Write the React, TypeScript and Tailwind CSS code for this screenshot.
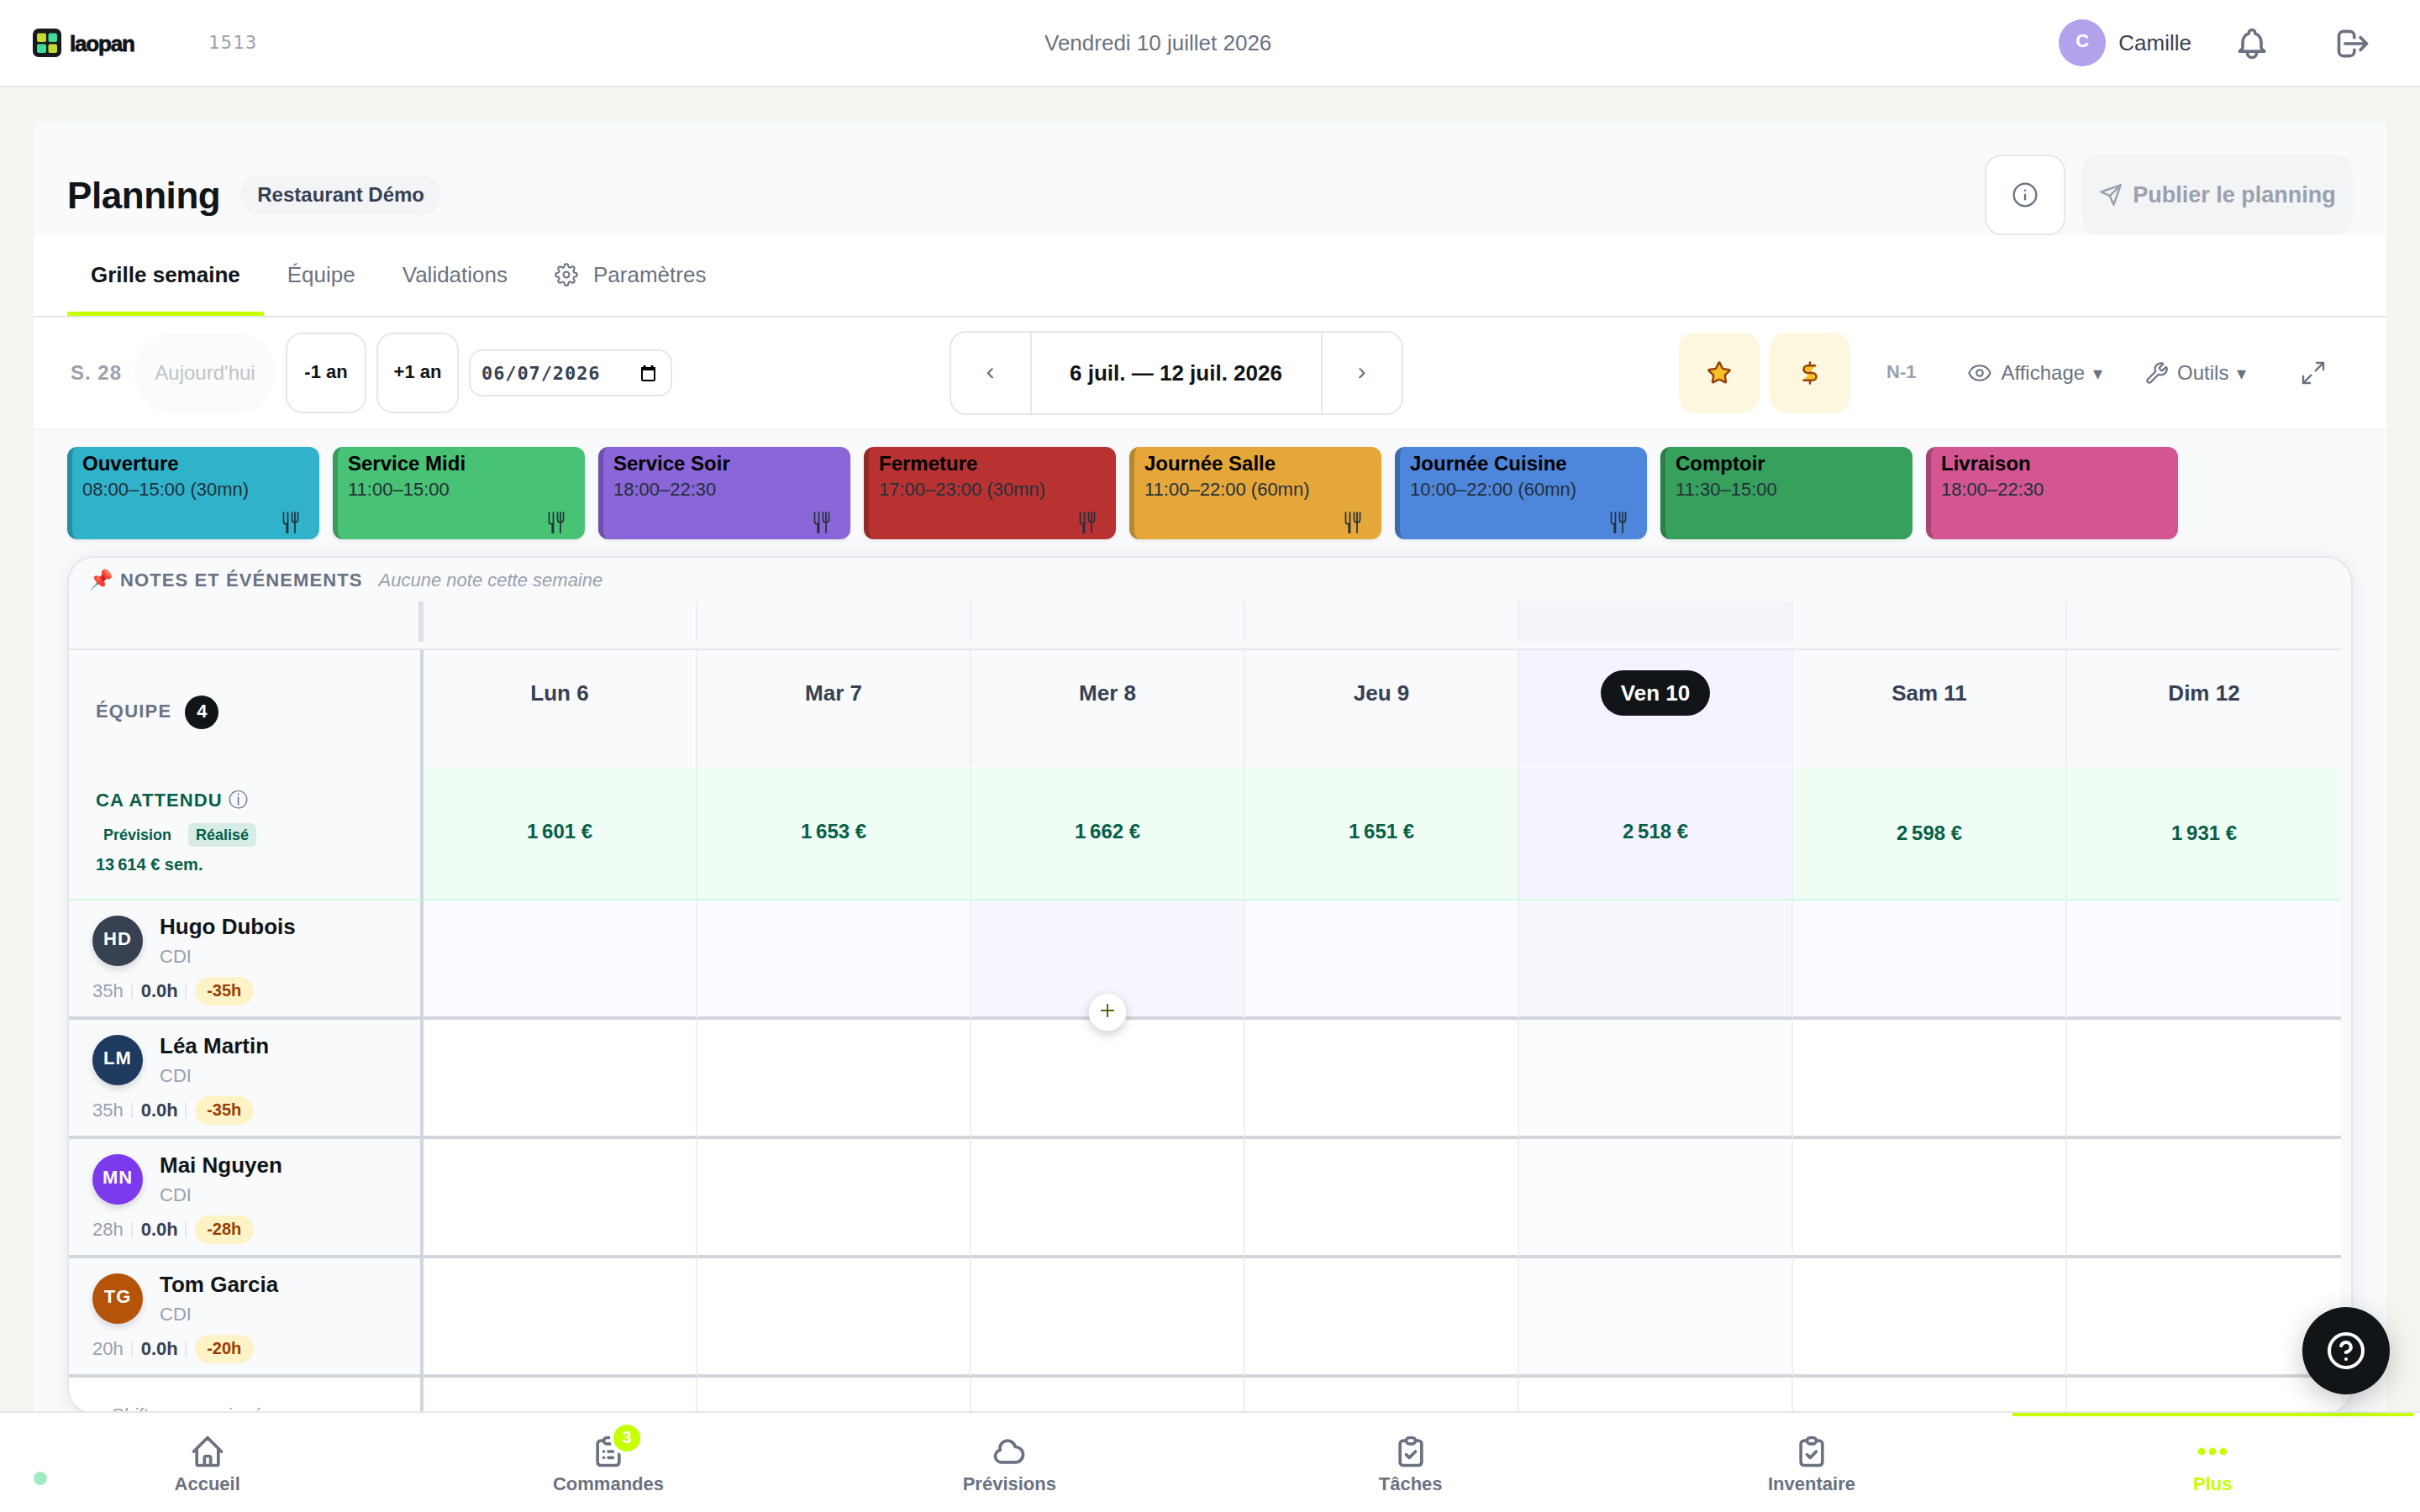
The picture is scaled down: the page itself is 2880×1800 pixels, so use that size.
import React from "react";
import { CircleHelp, DollarSign, Eye, Info, Maximize2, Star, Wrench } from "lucide-react";

const OUTLINE = {
  bell: "M15 17h5l-1.405-1.405A2.032 2.032 0 0118 14.158V11a6.002 6.002 0 00-4-5.659V5a2 2 0 10-4 0v.341C7.67 6.165 6 8.388 6 11v3.159c0 .538-.214 1.055-.595 1.436L4 17h5m6 0v1a3 3 0 11-6 0v-1m6 0H9",
  logout: "M17 16l4-4m0 0l-4-4m4 4H7m6 4v1a3 3 0 01-3 3H6a3 3 0 01-3-3V7a3 3 0 013-3h4a3 3 0 013 3v1",
  home: "M3 12l2-2m0 0l7-7 7 7M5 10v10a1 1 0 001 1h3m10-11l2 2m-2-2v10a1 1 0 01-1 1h-3m-6 0a1 1 0 001-1v-4a1 1 0 011-1h2a1 1 0 011 1v4a1 1 0 001 1m-6 0h6",
  list: "M9 5H7a2 2 0 00-2 2v12a2 2 0 002 2h10a2 2 0 002-2V7a2 2 0 00-2-2h-2M9 5a2 2 0 002 2h2a2 2 0 002-2M9 5a2 2 0 012-2h2a2 2 0 012 2m-3 7h3m-3 4h3m-6-4h.01M9 16h.01",
  check: "M9 5H7a2 2 0 00-2 2v12a2 2 0 002 2h10a2 2 0 002-2V7a2 2 0 00-2-2h-2M9 5a2 2 0 002 2h2a2 2 0 002-2M9 5a2 2 0 012-2h2a2 2 0 012 2m-6 9l2 2 4-4",
  cloud: "M3 15a4 4 0 004 4h9a5 5 0 10-.1-9.999 5.002 5.002 0 10-9.78 2.096A4.001 4.001 0 003 15z",
  dots: "M5 12h.01M12 12h.01M19 12h.01M6 12a1 1 0 11-2 0 1 1 0 012 0zm7 0a1 1 0 11-2 0 1 1 0 012 0zm7 0a1 1 0 11-2 0 1 1 0 012 0z",
};

function Outline({ name, weight = 2 }: { name: keyof typeof OUTLINE; weight?: number }) {
  return (
    <svg className="size-11" viewBox="0 0 24 24" fill="none" stroke="currentColor" strokeWidth={weight} strokeLinecap="round" strokeLinejoin="round">
      <path d={OUTLINE[name]} />
    </svg>
  );
}

function SendIcon() {
  return (
    <svg className="size-7" viewBox="0 0 24 24" fill="none" stroke="currentColor" strokeWidth={2.1} strokeLinecap="round" strokeLinejoin="round">
      <path d="M22 2 11 13M22 2l-7 20-4-9-9-4 20-7z" />
    </svg>
  );
}

function GearIcon() {
  return (
    <svg className="size-7" viewBox="0 0 24 24" fill="none" stroke="currentColor" strokeWidth={1.75} strokeLinecap="round" strokeLinejoin="round">
      <circle cx="12" cy="12" r="3" />
      <path d="M19.4 15a1.65 1.65 0 0 0 .33 1.82l.06.06a2 2 0 0 1 0 2.83 2 2 0 0 1-2.83 0l-.06-.06a1.65 1.65 0 0 0-1.82-.33 1.65 1.65 0 0 0-1 1.51V21a2 2 0 0 1-2 2 2 2 0 0 1-2-2v-.09A1.65 1.65 0 0 0 9 19.4a1.65 1.65 0 0 0-1.82.33l-.06.06a2 2 0 0 1-2.83 0 2 2 0 0 1 0-2.83l.06-.06a1.65 1.65 0 0 0 .33-1.82 1.65 1.65 0 0 0-1.51-1H3a2 2 0 0 1-2-2 2 2 0 0 1 2-2h.09A1.65 1.65 0 0 0 4.6 9a1.65 1.65 0 0 0-.33-1.82l-.06-.06a2 2 0 0 1 0-2.83 2 2 0 0 1 2.83 0l.06.06a1.65 1.65 0 0 0 1.82.33H9a1.65 1.65 0 0 0 1-1.51V3a2 2 0 0 1 2-2 2 2 0 0 1 2 2v.09a1.65 1.65 0 0 0 1 1.51 1.65 1.65 0 0 0 1.82-.33l.06-.06a2 2 0 0 1 2.83 0 2 2 0 0 1 0 2.83l-.06.06a1.65 1.65 0 0 0-.33 1.82V9a1.65 1.65 0 0 0 1.51 1H21a2 2 0 0 1 2 2 2 2 0 0 1-2 2h-.09a1.65 1.65 0 0 0-1.51 1z" />
    </svg>
  );
}

function Logo() {
  return (
    <svg className="size-[34px]" viewBox="0 0 34 34">
      <rect width="34" height="34" rx="7" fill="#16191d" />
      <rect x="5" y="5.5" width="11" height="10.5" rx="2" fill="#c6d92f" />
      <rect x="18.5" y="5.5" width="10.5" height="10.5" rx="2" fill="#3ddc97" />
      <rect x="5" y="18.5" width="11" height="10.5" rx="2" fill="#3ddc97" />
      <rect x="18.5" y="18.5" width="10.5" height="10.5" rx="2" fill="#c6d92f" />
    </svg>
  );
}

function Cutlery() {
  return (
    <svg className="h-7 w-5" viewBox="0 0 20 28" fill="none" stroke="#22303a" strokeWidth={1.7} strokeLinecap="round">
      <path d="M1.500 2v11c0 2 1.500 3 4 3M6.500 2v24" />
      <path d="M5.500 15.500v10.500" strokeWidth={2.2} />
      <path d="M11.500 2v8c0 3 1 4 3.500 4s3.500-1 3.500-4V2M15 2v24" />
    </svg>
  );
}

function Header() {
  return (
    <header className="flex h-[104px] shrink-0 items-center border-b-2 border-gray-200 bg-white pl-[39px] pr-[58px]">
      <div className="flex w-[204px] items-center gap-[10px]">
        <Logo />
        <span className="pt-[2px] text-[26px] font-bold leading-none tracking-[-1.2px] text-[#111518] [-webkit-text-stroke:0.8px_#111518]">laopan</span>
      </div>
      <span className="w-[1000px] pl-[5px] font-['DejaVu_Sans_Mono',monospace] text-[22px] leading-none tracking-[1.4px] text-gray-400">1513</span>
      <span className="text-[26px] leading-none text-gray-500">Vendredi 10 juillet 2026</span>
      <div className="ml-auto flex items-center">
        <div className="flex size-14 items-center justify-center rounded-full bg-[#b3a1ec] pb-[6px] text-[22px] font-bold text-white">C</div>
        <span className="ml-[15px] text-[26px] leading-none text-gray-700">Camille</span>
        <span className="ml-[50px] pt-px text-gray-500"><Outline name="bell" /></span>
        <span className="ml-[76px] pt-px text-gray-500"><Outline name="logout" /></span>
      </div>
    </header>
  );
}

function Title() {
  return (
    <div className="flex h-[136px] items-end px-10">
      <div className="flex h-24 w-full items-center">
        <h1 className="pt-[2px] text-[44px] font-bold leading-none tracking-[-0.44px] text-[#111518]">Planning</h1>
        <span className="ml-6 flex h-12 items-center rounded-full bg-gray-100 px-[20px] text-[24px] font-bold text-gray-700">Restaurant Démo</span>
        <button className="ml-auto flex size-24 items-center justify-center rounded-[20px] border-2 border-gray-200 bg-white text-gray-500">
          <Info className="size-8" strokeWidth={1.75} />
        </button>
        <button className="ml-5 flex h-24 w-[322px] items-center justify-center gap-3 rounded-[20px] bg-gray-100 text-[27px] font-bold text-gray-400">
          <SendIcon />
          Publier le planning
        </button>
      </div>
    </div>
  );
}

function Tabs() {
  return (
    <div className="flex h-[98px] items-stretch border-b-2 border-gray-200 bg-white px-10 text-[26px] text-gray-500">
      <span className="flex items-center border-b-[5px] border-[#c6ff00] px-7 pt-1 font-bold text-[#111518]">Grille semaine</span>
      <span className="flex items-center px-7 pb-[2px]">Équipe</span>
      <span className="flex items-center px-7 pb-[2px]">Validations</span>
      <span className="flex items-center gap-[18px] px-7 pb-[2px]">
        <GearIcon />
        Paramètres
      </span>
    </div>
  );
}

function Toolbar() {
  return (
    <div className="flex h-[134px] items-center justify-between border-b-2 border-gray-100 bg-white px-10">
      <div className="flex w-[1050px] items-center">
        <span className="w-20 pl-1 text-[24px] font-bold tracking-[1px] text-gray-400">S. 28</span>
        <button className="flex h-24 w-[168px] items-center justify-center rounded-[48px] bg-[#fafbfb] text-[24px] text-[#c0c4c9]">Aujourd'hui</button>
        <button className="ml-3 flex h-24 w-24 items-center justify-center rounded-[20px] border-2 border-gray-200 pb-[3px] text-[22px] font-bold text-[#111518]">-1 an</button>
        <button className="ml-3 flex h-24 w-[98px] items-center justify-center rounded-[20px] border-2 border-gray-200 pb-[3px] text-[22px] font-bold text-[#111518]">+1 an</button>
        <span className="ml-3 flex h-14 w-[242px] items-center justify-between rounded-2xl border-2 border-gray-200 bg-white pl-[13px] pr-[18px] font-['DejaVu_Sans_Mono',monospace] text-[22px] font-bold tracking-[0.9px] text-gray-700">
          06/07/2026
          <svg className="h-[19px] w-[17px]" viewBox="0 0 17 19" fill="none" stroke="#000" strokeWidth={2}>
            <path d="M1 3h15v13.500a1.500 1.500 0 0 1-1.500 1.500h-12A1.500 1.500 0 0 1 1 16.500z" />
            <path d="M1 4.500h15M4 0v3M13 0v3" strokeWidth={3} />
          </svg>
        </span>
      </div>
      <div className="flex h-[100px] w-[540px] items-stretch rounded-[20px] border-2 border-gray-200 text-[#111518]">
        <span className="flex w-24 items-center justify-center border-r-2 border-gray-200 pb-[6px] pr-px text-[30px] text-gray-500">‹</span>
        <span className="flex flex-1 items-center justify-center pr-px text-[26px] font-bold">6 juil. — 12 juil. 2026</span>
        <span className="flex w-24 items-center justify-center border-l-2 border-gray-200 pb-[6px] pr-px text-[30px] text-gray-500">›</span>
      </div>
      <div className="flex w-[1130px] items-center pl-[328px] text-[24px] text-gray-500">
        <button className="flex size-24 items-center justify-center rounded-[20px] bg-[#fef7e0]">
          <Star className="size-[30px] text-[#92400e]" fill="#fbbf24" strokeWidth={2} />
        </button>
        <button className="ml-3 flex size-24 items-center justify-center rounded-[20px] bg-[#fef7e0]">
          <DollarSign className="size-[30px] text-[#92400e]" fill="#fbbf24" strokeWidth={2} />
        </button>
        <span className="ml-[43px] pb-[3px] text-[22px] font-bold text-gray-400">N-1</span>
        <span className="ml-[61px] flex items-center gap-[10px]">
          <Eye className="size-[30px]" strokeWidth={1.75} />
          Affichage
          <span className="text-[22px]">▾</span>
        </span>
        <span className="ml-[51px] flex items-center gap-[10px]">
          <Wrench className="size-7" strokeWidth={1.9} />
          Outils
          <span className="text-[22px]">▾</span>
        </span>
        <Maximize2 className="ml-auto mr-[31px] size-8" strokeWidth={1.8} />
      </div>
    </div>
  );
}

const SHIFTS = [
  { name: "Ouverture", time: "08:00–15:00 (30mn)", meal: true, bg: "bg-[#2fb2ca]" },
  { name: "Service Midi", time: "11:00–15:00", meal: true, bg: "bg-[#48c274]" },
  { name: "Service Soir", time: "18:00–22:30", meal: true, bg: "bg-[#8a66d9]" },
  { name: "Fermeture", time: "17:00–23:00 (30mn)", meal: true, bg: "bg-[#b93232]" },
  { name: "Journée Salle", time: "11:00–22:00 (60mn)", meal: true, bg: "bg-[#e5a73a]" },
  { name: "Journée Cuisine", time: "10:00–22:00 (60mn)", meal: true, bg: "bg-[#4e86db]" },
  { name: "Comptoir", time: "11:30–15:00", meal: false, bg: "bg-[#36a05c]" },
  { name: "Livraison", time: "18:00–22:30", meal: false, bg: "bg-[#d35692]" },
];

function ShiftBar() {
  return (
    <div className="flex gap-4 px-10 pt-5">
      {SHIFTS.map((s) => (
        <div key={s.name} className={`${s.bg} relative h-[110px] w-[300px] rounded-xl border-l-[6px] border-black/20 pl-3 pt-[5px] shadow-[0_2px_4px_rgba(0,0,0,0.08)]`}>
          <div className="text-[24px] font-bold leading-[29px] text-black">{s.name}</div>
          <div className="pt-px text-[22px] leading-[31px] text-[#22303a]">{s.time}</div>
          {s.meal && <span className="absolute bottom-[6px] right-6"><Cutlery /></span>}
        </div>
      ))}
    </div>
  );
}

const DAYS = [
  { label: "Lun 6", ca: "1\u202f601\u00a0€" },
  { label: "Mar 7", ca: "1\u202f653\u00a0€" },
  { label: "Mer 8", ca: "1\u202f662\u00a0€" },
  { label: "Jeu 9", ca: "1\u202f651\u00a0€" },
  { label: "Ven 10", ca: "2\u202f518\u00a0€" },
  { label: "Sam 11", ca: "2\u202f598\u00a0€" },
  { label: "Dim 12", ca: "1\u202f931\u00a0€" },
];
const TODAY = 4;
const WEEKEND = 5;

const STAFF = [
  { initials: "HD", name: "Hugo Dubois", hours: "35h", delta: "-35h", bg: "bg-[#374151]" },
  { initials: "LM", name: "Léa Martin", hours: "35h", delta: "-35h", bg: "bg-[#1e3a5f]" },
  { initials: "MN", name: "Mai Nguyen", hours: "28h", delta: "-28h", bg: "bg-[#7c3aed]" },
  { initials: "TG", name: "Tom Garcia", hours: "20h", delta: "-20h", bg: "bg-[#b45309]" },
];

function cellTone(row: number, col: number) {
  if (row === 0) {
    if (col === 2) return "bg-[#f7f6ff]";
    return col === TODAY ? "bg-[#f7f7fe]" : "bg-[#fafbff]";
  }
  return col === TODAY ? "bg-[#fcfcfe]" : "bg-white";
}

function Planner() {
  return (
    <div className="mx-10 mt-5 h-[1022px] overflow-hidden rounded-[32px] border-2 border-gray-200 bg-[#f9fafc] pr-3 shadow-[0_4px_24px_rgba(15,23,42,0.08)]">
      <div className="flex h-[110px] flex-col border-b-2 border-gray-200">
        <div className="flex h-[52px] items-center pl-6 text-[22px]">
          <span className="w-8 text-[23px] leading-none">📌</span>
          <span className="pl-[5px] font-bold tracking-[1.1px] text-gray-500">NOTES ET ÉVÉNEMENTS</span>
          <span className="ml-[19px] italic text-gray-400">Aucune note cette semaine</span>
        </div>
        <div className="flex h-12">
          <div className="w-[422px] border-r-[6px] border-[#dddfeb]" />
          <div className="grid flex-1 grid-cols-7">
            {DAYS.map((d, i) => (
              <div key={d.label} className={`${i === TODAY ? "bg-[#f5f4f9]" : ""} ${i < 6 ? "border-r-2" : ""} border-[#eeeff4]`} />
            ))}
          </div>
        </div>
      </div>

      <div className="flex h-[140px]">
        <div className="flex w-[422px] items-center gap-4 border-r-4 border-gray-300 pl-8 pt-[8px]">
          <span className="pb-[3px] text-[22px] font-bold tracking-[1.2px] text-gray-500">ÉQUIPE</span>
          <span className="flex size-10 items-center justify-center rounded-full bg-[#111518] pb-[3px] text-[22px] font-bold text-white">4</span>
        </div>
        <div className="grid flex-1 grid-cols-7">
          {DAYS.map((d, i) => (
            <div key={d.label} className={`${i === TODAY ? "bg-[#f5f3ff]" : ""} flex justify-center border-b-2 border-b-[#f9fafc] pt-6 ${i < 6 ? "border-r-2" : ""} border-r-[#eeeff2]`}>
              <span className={`flex h-[54px] items-center rounded-full px-6 text-[26px] font-bold ${i === TODAY ? "bg-[#111518] text-white" : "text-gray-700"}`}>{d.label}</span>
            </div>
          ))}
        </div>
      </div>

      <div className="flex h-[158px]">
        <div className="w-[422px] border-b-2 border-r-4 border-b-[#d1fae5] border-r-gray-300 pl-8 pt-[22px] font-bold text-[#065f46]">
          <div className="flex h-8 items-center text-[22px] tracking-[1.1px]">
            CA ATTENDU
            <span className="ml-[7px] text-[23px] font-normal leading-none text-gray-500">ⓘ</span>
          </div>
          <div className="mt-3 flex h-7 items-center gap-[10px] text-[18px]">
            <span className="pl-[9px] pr-[10px]">Prévision</span>
            <span className="flex h-7 items-center rounded-md bg-[#d8ece6] px-[9px]">Réalisé</span>
          </div>
          <div className="mt-[7px] text-[20px] leading-[28px]">{"13\u202f614\u00a0€ sem."}</div>
        </div>
        <div className="grid flex-1 grid-cols-7">
          {DAYS.map((d, i) => (
            <div
              key={d.label}
              className={`${i === TODAY ? "bg-[#f5f3ff]" : "bg-[#effdf4]"} flex items-center justify-center border-b-2 border-b-[#d1fae5] text-[24px] font-bold text-[#065f46] ${i < 6 ? "border-r-2" : ""} border-r-[#ebf0ef] ${i >= WEEKEND ? "pt-0" : "pb-1"}`}
            >
              {d.ca}
            </div>
          ))}
        </div>
      </div>

      {STAFF.map((p, r) => (
        <div key={p.initials} className="flex h-[142px]">
          <div className="w-[422px] border-b-4 border-r-4 border-gray-300 pl-7 pt-4">
            <div className="flex items-start">
              <span className={`${p.bg} mt-[2px] flex size-[60px] items-center justify-center rounded-full pb-[5px] text-[22px] font-bold tracking-[1px] text-white shadow-[0_4px_8px_rgba(0,0,0,0.15)]`}>{p.initials}</span>
              <div className="ml-5">
                <div className="pb-1 text-[26px] font-bold leading-[30px] text-[#111518]">{p.name}</div>
                <div className="text-[22px] leading-[34px] text-gray-400">CDI</div>
              </div>
            </div>
            <div className="mt-[6px] flex h-9 items-center text-[22px]">
              <span className="pb-[2px] text-gray-400">{p.hours}</span>
              <span className="ml-[9px] h-[18px] w-[2px] bg-gray-200" />
              <span className="ml-[10px] pb-[2px] font-bold text-gray-700">0.0h</span>
              <span className="ml-2 h-[18px] w-[2px] bg-gray-200" />
              <span className="ml-[10px] flex h-[34px] w-[70px] items-center justify-center rounded-full bg-amber-100 pb-[2px] text-[20px] font-bold text-amber-800">{p.delta}</span>
            </div>
          </div>
          <div className="grid flex-1 grid-cols-7">
            {DAYS.map((d, c) => (
              <div key={d.label} className={`${cellTone(r, c)} relative border-b-4 border-b-gray-300 ${c < 6 ? "border-r-2" : ""} border-r-[#eeeff3]`}>
                {r === 0 && c === 2 && (
                  <span className="absolute -bottom-[18px] left-1/2 z-10 flex size-[46px] -translate-x-1/2 items-center justify-center rounded-full border border-gray-200 bg-white shadow-[0_4px_12px_rgba(0,0,0,0.18)]">
                    <svg className="mb-[4px] size-4" viewBox="0 0 16 16" stroke="#4d6b10" strokeWidth={2}><path d="M8 0v16M0 8h16" /></svg>
                  </span>
                )}
              </div>
            ))}
          </div>
        </div>
      ))}

      <div className="flex h-[100px]">
        <div className="w-[422px] border-r-4 border-gray-300 bg-white pl-[50px] pt-8 text-[22px] italic leading-[26px] text-gray-400">Shifts non assignés</div>
        <div className="grid flex-1 grid-cols-7">
          {DAYS.map((d, i) => (
            <div key={d.label} className={`bg-white ${i < 6 ? "border-r-2" : ""} border-[#eeeff5]`} />
          ))}
        </div>
      </div>
    </div>
  );
}

const NAV: { label: string; icon: keyof typeof OUTLINE; badge?: number; active?: boolean }[] = [
  { label: "Accueil", icon: "home" },
  { label: "Commandes", icon: "list", badge: 3 },
  { label: "Prévisions", icon: "cloud" },
  { label: "Tâches", icon: "check" },
  { label: "Inventaire", icon: "check" },
  { label: "Plus", icon: "dots", active: true },
];

function BottomNav() {
  return (
    <nav className="relative flex h-[120px] shrink-0 border-t-2 border-gray-200 bg-white px-2">
      {NAV.map((n) => (
        <div key={n.label} className={`flex flex-1 flex-col items-center border-t-4 pt-5 ${n.active ? "border-[#c6ff00] text-[#c6ff00]" : "border-transparent text-gray-500"}`}>
          <span className="relative">
            <Outline name={n.icon} weight={n.active ? 2.8 : 2} />
            {n.badge && (
              <span className="absolute -right-[20px] -top-[14px] flex size-10 items-center justify-center rounded-full border-4 border-white bg-[#c6ff00] pb-[2px] text-[20px] font-bold leading-none text-white">{n.badge}</span>
            )}
          </span>
          <span className="mt-1 text-[22px] font-bold leading-[26px]">{n.label}</span>
        </div>
      ))}
      <span className="absolute left-10 top-[70px] size-4 rounded-full bg-[#a0ecc2]" />
    </nav>
  );
}

export default function App() {
  return (
    <div className="relative flex h-[1800px] w-[2880px] flex-col overflow-hidden bg-[#f5f4ef] font-['Liberation_Sans',Arial,sans-serif]">
      <Header />
      <main className="min-h-0 flex-1 overflow-hidden px-10 pt-10">
        <section className="h-[1700px] bg-[#f8fafc]">
          <Title />
          <Tabs />
          <Toolbar />
          <ShiftBar />
          <Planner />
        </section>
      </main>
      <BottomNav />
      <button className="absolute bottom-[140px] right-9 z-20 flex size-[104px] items-center justify-center rounded-full bg-[#111518] text-white shadow-[0_8px_32px_rgba(0,0,0,0.22)]">
        <CircleHelp className="size-12" strokeWidth={2} />
      </button>
    </div>
  );
}
